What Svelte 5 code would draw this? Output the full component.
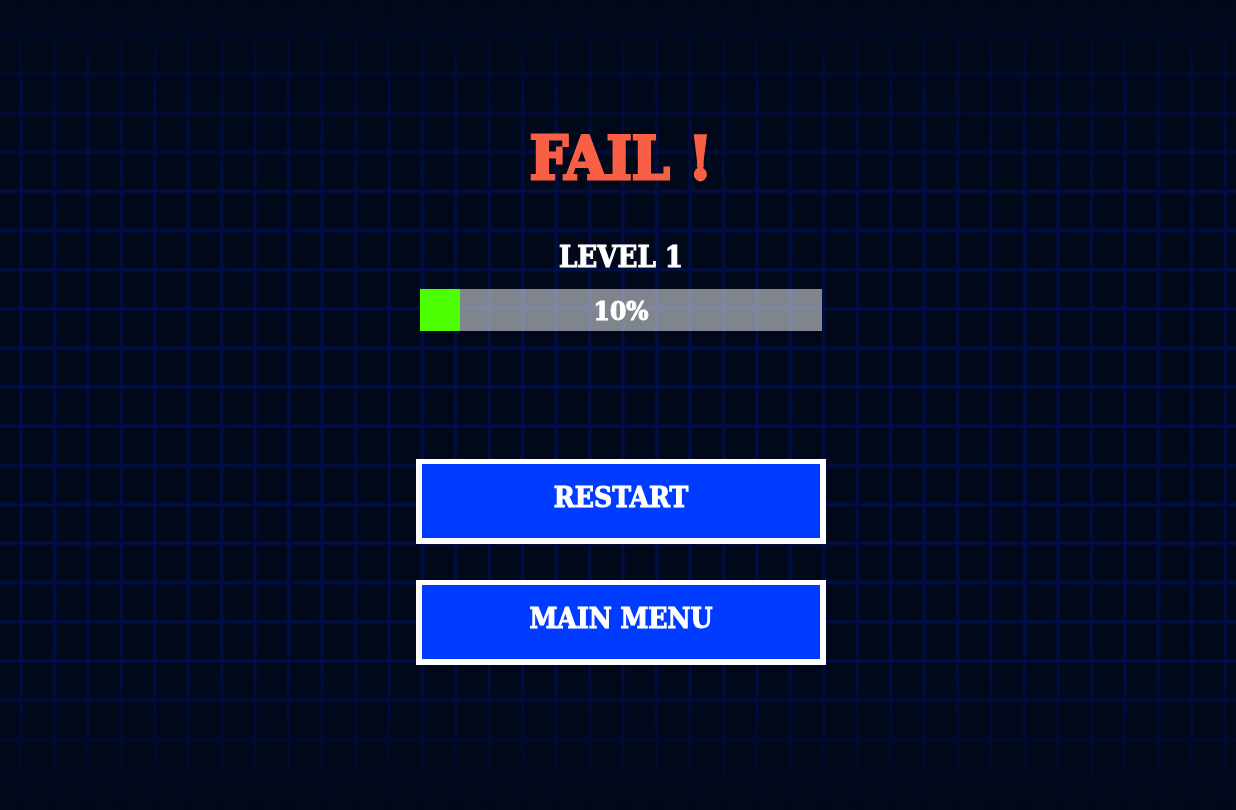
<script>
  let level = 1;
  let progress = 10;

  const columns = Array.from({ length: 37 }, (_, i) => 21 + i * 33.45);
  const rows = Array.from({ length: 20 }, (_, i) => 35 + i * 39.12);

  const restart = () => {
    progress = 0;
  };

  const mainMenu = () => {
    level = 1;
    progress = 0;
  };
</script>

<svg class="grid" viewBox="0 0 1236 810" preserveAspectRatio="none" aria-hidden="true">
  <defs>
    <linearGradient id="fade" x1="0" y1="0" x2="0" y2="1">
      <stop offset="0" stop-color="#000" />
      <stop offset="0.04" stop-color="#444" />
      <stop offset="0.1" stop-color="#aaa" />
      <stop offset="0.25" stop-color="#fff" />
      <stop offset="0.8" stop-color="#fff" />
      <stop offset="0.91" stop-color="#888" />
      <stop offset="0.97" stop-color="#333" />
      <stop offset="1" stop-color="#000" />
    </linearGradient>
    <mask id="grid-fade" maskUnits="userSpaceOnUse" x="0" y="0" width="1236" height="810">
      <rect width="1236" height="810" fill="url(#fade)" />
    </mask>
  </defs>
  <g mask="url(#grid-fade)">
    {#each columns as x}
      <line class="glow" x1={x} y1="0" x2={x} y2="810" />
      <line class="core" x1={x} y1="0" x2={x} y2="810" />
    {/each}
    {#each rows as y}
      <line class="glow" x1="0" y1={y} x2="1236" y2={y} />
      <line class="core" x1="0" y1={y} x2="1236" y2={y} />
    {/each}
  </g>
</svg>

<main class="screen">
  <h1>FAIL !</h1>
  <h2>LEVEL {level}</h2>
  <div class="bar" role="progressbar" aria-label="Level progress" aria-valuenow={progress} aria-valuemin="0" aria-valuemax="100">
    <div class="fill" style="width: {progress}%"></div>
    <span class="percent">{progress}%</span>
  </div>
  <div class="actions">
    <button on:click={restart}>RESTART</button>
    <button on:click={mainMenu}>MAIN MENU</button>
  </div>
</main>

<style>
  :global(body) {
    margin: 0;
    background: #00081a;
  }

  .grid {
    position: fixed;
    inset: 0;
    width: 100%;
    height: 100%;
  }

  .glow {
    stroke: #000d3c;
    stroke-width: 5;
    stroke-opacity: 0.6;
  }

  .core {
    stroke: #001050;
    stroke-width: 2;
    stroke-opacity: 0.8;
  }

  .screen {
    position: relative;
    box-sizing: border-box;
    min-height: 100vh;
    padding: 128px 0 128px 6px;
    display: flex;
    flex-direction: column;
    align-items: center;
    color: #fff;
    font-family: "DejaVu Serif Condensed", "DejaVu Serif", serif;
    font-weight: bold;
  }

  h1 {
    margin: 0 0 49px;
    color: #f86045;
    font-size: 60px;
    line-height: 60px;
    -webkit-text-stroke: 3px #f86045;
  }

  h2 {
    margin: 0 0 12px;
    font-size: 29px;
    line-height: 40px;
    -webkit-text-stroke: 1px #fff;
  }

  .bar {
    position: relative;
    width: 402px;
    max-width: 90%;
    height: 42px;
    background: rgba(255, 255, 255, 0.5);
  }

  .fill {
    height: 100%;
    background: #4cff00;
  }

  .percent {
    position: absolute;
    inset: 0;
    text-align: center;
    font-size: 26px;
    line-height: 44px;
    -webkit-text-stroke: 1px #fff;
  }

  .actions {
    width: 410px;
    max-width: 94%;
    margin-top: 128px;
    display: flex;
    flex-direction: column;
    gap: 36px;
  }

  button {
    height: 85px;
    padding: 0 0 8px;
    border: 6px solid #fff;
    border-top-width: 5px;
    background: #003cff;
    color: #fff;
    font: inherit;
    font-size: 28px;
    cursor: pointer;
    -webkit-text-stroke: 1px #fff;
  }
</style>
